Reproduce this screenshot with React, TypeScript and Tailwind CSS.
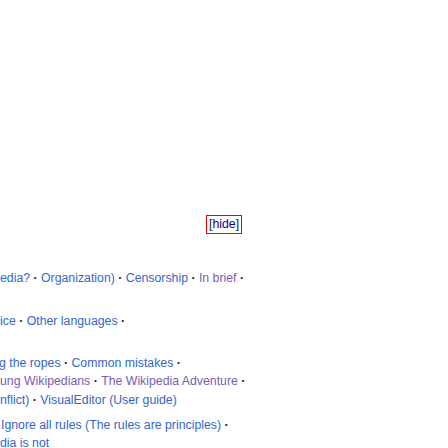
import React from 'react';

type Item = { label: string; visited?: boolean; sep?: boolean };

const Link = ({ item }: { item: Item }) => (
  <>
    <span className={item.visited ? 'text-[#795cb2]' : 'text-[#3366cc]'}>{item.label}</span>
    {item.sep !== false && <b className="text-[#202122]"> · </b>}
  </>
);

const Line = ({ items, className = '' }: { items: Item[]; className?: string }) => (
  <div className={`whitespace-nowrap h-[18px] leading-[18px] ${className}`}>
    {items.map((it, i) => (
      <Link key={i} item={it} />
    ))}
  </div>
);

const App = () => {
  return (
    <div
      className="w-[448px] h-[448px] overflow-hidden bg-white text-[12.3px] text-[#202122]"
      style={{ fontFamily: '"Liberation Sans", Arial, sans-serif' }}
    >
      <div className="pt-[215px] pl-[206px]">
        <div className="w-[36px] h-[19px] border border-[#ee0000] flex items-center justify-center leading-none">
          <span>[</span>
          <span className="text-[#0b0080]">hide</span>
          <span>]</span>
        </div>
      </div>

      <Line
        className="mt-[35px]"
        items={[
          { label: 'edia?' },
          { label: 'Organization)' },
          { label: 'Censorship' },
          { label: 'In brief', visited: true },
        ]}
      />

      <Line className="mt-[25px]" items={[{ label: 'ice' }, { label: 'Other languages' }]} />

      <div className="mt-[24px]">
        <Line className="-ml-[1px]" items={[{ label: 'g the ropes' }, { label: 'Common mistakes' }]} />
        <Line
          className="h-[19px]"
          items={[
            { label: 'ung Wikipedians', visited: true },
            { label: 'The Wikipedia Adventure', visited: true },
          ]}
        />
        <Line
          items={[
            { label: 'nflict)' },
            { label: 'VisualEditor (User guide)', sep: false },
          ]}
        />
      </div>

      <div className="mt-[7px]">
        <Line className="pl-[1px]" items={[{ label: 'Ignore all rules (The rules are principles)' }]} />
        <Line items={[{ label: 'dia is not', sep: false }]} />
      </div>
    </div>
  );
};

export default App;
